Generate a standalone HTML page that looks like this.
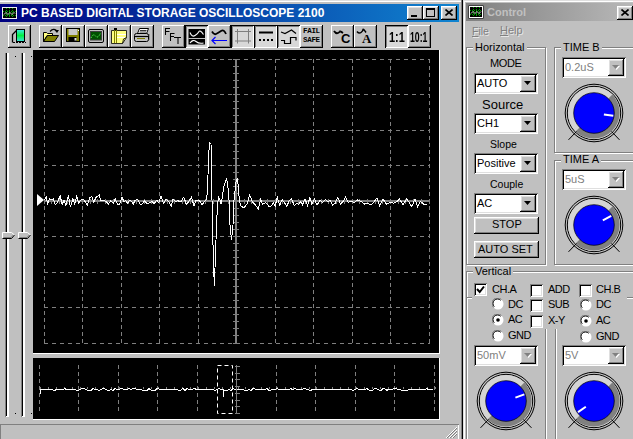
<!DOCTYPE html><html><head><meta charset="utf-8"><style>html,body{margin:0;padding:0;}body{width:633px;height:439px;overflow:hidden;position:relative;background:#c0c0c0;font-family:'Liberation Sans', sans-serif}</style></head><body>
<div style="position:absolute;left:0px;top:0px;width:462px;height:1px;background:#dfdfdf"></div>
<div style="position:absolute;left:0px;top:1px;width:462px;height:1px;background:#fff"></div>
<div style="position:absolute;left:0px;top:4px;width:459px;height:18px;background:linear-gradient(to right,#000080,#1084d0)"></div>
<svg style="position:absolute;left:2px;top:7px" width="15" height="12"><rect x="0.5" y="0.5" width="14" height="11" fill="#000" stroke="#f0f0f0"/><path d="M1 4.5H14M1 8.5H14M4.5 1V11M7.5 1V11M10.5 1V11" stroke="#00a000" stroke-width="1" stroke-dasharray="1 1"/><path d="M2 7.5L4 5.5L6 7.5L8 5.5L10 7.5L12 5.5L13 6.5" stroke="#e0ffe0" fill="none" stroke-width="0.9"/></svg>
<div style="position:absolute;left:21px;top:7px;font:bold 12px/12px 'Liberation Sans', sans-serif;color:#fff;white-space:nowrap;">PC BASED DIGITAL STORAGE OSCILLOSCOPE 2100</div>
<div style="position:absolute;left:407px;top:6px;width:16px;height:14px;background:#c0c0c0;box-shadow:inset -1px -1px #000,inset 1px 1px #fff,inset -2px -2px #808080,inset 2px 2px #dfdfdf"></div>
<div style="position:absolute;left:423px;top:6px;width:16px;height:14px;background:#c0c0c0;box-shadow:inset -1px -1px #000,inset 1px 1px #fff,inset -2px -2px #808080,inset 2px 2px #dfdfdf"></div>
<div style="position:absolute;left:441px;top:6px;width:16px;height:14px;background:#c0c0c0;box-shadow:inset -1px -1px #000,inset 1px 1px #fff,inset -2px -2px #808080,inset 2px 2px #dfdfdf"></div>
<div style="position:absolute;left:411px;top:15px;width:6px;height:2px;background:#000"></div>
<div style="position:absolute;left:426px;top:8px;width:9px;height:9px;border:1px solid #000;border-top-width:2px;box-sizing:border-box"></div>
<svg style="position:absolute;left:445px;top:9px" width="8" height="7"><path d="M0.5 0.5L7.5 6.5M7.5 0.5L0.5 6.5" stroke="#000" stroke-width="1.6"/></svg>
<div style="position:absolute;left:461px;top:0px;width:1px;height:439px;background:#808080"></div>
<div style="position:absolute;left:462px;top:0px;width:1px;height:439px;background:#000"></div>
<div style="position:absolute;left:8px;top:25px;width:23px;height:23px;background:#c0c0c0;box-shadow:inset -1px -1px #000,inset 1px 1px #fff,inset -2px -2px #808080"></div>
<div style="position:absolute;left:39px;top:25px;width:23px;height:23px;background:#c0c0c0;box-shadow:inset -1px -1px #000,inset 1px 1px #fff,inset -2px -2px #808080"></div>
<div style="position:absolute;left:62px;top:25px;width:23px;height:23px;background:#c0c0c0;box-shadow:inset -1px -1px #000,inset 1px 1px #fff,inset -2px -2px #808080"></div>
<div style="position:absolute;left:85px;top:25px;width:23px;height:23px;background:#c0c0c0;box-shadow:inset -1px -1px #000,inset 1px 1px #fff,inset -2px -2px #808080"></div>
<div style="position:absolute;left:108px;top:25px;width:23px;height:23px;background:#c0c0c0;box-shadow:inset -1px -1px #000,inset 1px 1px #fff,inset -2px -2px #808080"></div>
<div style="position:absolute;left:131px;top:25px;width:23px;height:23px;background:#c0c0c0;box-shadow:inset -1px -1px #000,inset 1px 1px #fff,inset -2px -2px #808080"></div>
<div style="position:absolute;left:162px;top:25px;width:23px;height:23px;background:#c0c0c0;box-shadow:inset -1px -1px #000,inset 1px 1px #fff,inset -2px -2px #808080"></div>
<div style="position:absolute;left:185px;top:25px;width:23px;height:23px;background:#d8d8d8;box-shadow:inset 1px 1px #000,inset -1px -1px #fff,inset 2px 2px #808080"></div>
<div style="position:absolute;left:208px;top:25px;width:23px;height:23px;background:#c0c0c0;box-shadow:inset -1px -1px #000,inset 1px 1px #fff,inset -2px -2px #808080"></div>
<div style="position:absolute;left:231px;top:25px;width:23px;height:23px;background:#d8d8d8;box-shadow:inset 1px 1px #000,inset -1px -1px #fff,inset 2px 2px #808080"></div>
<div style="position:absolute;left:254px;top:25px;width:23px;height:23px;background:#d8d8d8;box-shadow:inset 1px 1px #000,inset -1px -1px #fff,inset 2px 2px #808080"></div>
<div style="position:absolute;left:277px;top:25px;width:23px;height:23px;background:#d8d8d8;box-shadow:inset 1px 1px #000,inset -1px -1px #fff,inset 2px 2px #808080"></div>
<div style="position:absolute;left:300px;top:25px;width:23px;height:23px;background:#c0c0c0;box-shadow:inset -1px -1px #000,inset 1px 1px #fff,inset -2px -2px #808080"></div>
<div style="position:absolute;left:331px;top:25px;width:23px;height:23px;background:#c0c0c0;box-shadow:inset -1px -1px #000,inset 1px 1px #fff,inset -2px -2px #808080"></div>
<div style="position:absolute;left:354px;top:25px;width:23px;height:23px;background:#c0c0c0;box-shadow:inset -1px -1px #000,inset 1px 1px #fff,inset -2px -2px #808080"></div>
<div style="position:absolute;left:385px;top:25px;width:23px;height:23px;background:#d8d8d8;box-shadow:inset 1px 1px #000,inset -1px -1px #fff,inset 2px 2px #808080"></div>
<div style="position:absolute;left:408px;top:25px;width:23px;height:23px;background:#c0c0c0;box-shadow:inset -1px -1px #000,inset 1px 1px #fff,inset -2px -2px #808080"></div>
<svg style="position:absolute;left:8px;top:25px" width="23" height="23"><defs><linearGradient id="scr" x1="0" y1="0" x2="0" y2="1"><stop offset="0" stop-color="#40e8e8"/><stop offset="0.5" stop-color="#00f040"/><stop offset="1" stop-color="#40e0e0"/></linearGradient></defs><path d="M4.5 17.5V9.5L8.5 5.5" fill="none" stroke="#000" stroke-width="1.3"/><rect x="8.5" y="4.5" width="8" height="12" fill="url(#scr)" stroke="#000"/><path d="M5 17.5H18" stroke="#000" stroke-dasharray="2 1"/></svg><svg style="position:absolute;left:39px;top:25px" width="23" height="23"><path d="M4.5 7.5H7.5L8.5 8.5H13.5V10.5H8L4.5 16.5Z" fill="#ffff80" stroke="#000"/><path d="M4.5 16.5L8.5 10.5H19.5L15.5 16.5Z" fill="#808000" stroke="#000"/><path d="M11 6.5Q14 3 17.5 5.5" fill="none" stroke="#000" stroke-width="1.2"/><path d="M15.5 5H20L18 8Z" fill="#000"/></svg><svg style="position:absolute;left:62px;top:25px" width="23" height="23"><rect x="4.5" y="3.5" width="13" height="13" fill="#808000" stroke="#000"/><rect x="6.5" y="4" width="9" height="6" fill="#c8c8c8"/><rect x="6.5" y="12" width="8" height="4.5" fill="#000"/><rect x="12.5" y="13" width="2" height="2.5" fill="#e0e0e0"/><rect x="16" y="5" width="1" height="1" fill="#fff"/></svg><svg style="position:absolute;left:85px;top:25px" width="23" height="23"><rect x="3.5" y="4.5" width="15" height="13" rx="1.5" fill="#c0c0c0" stroke="#000"/><rect x="5.5" y="6.5" width="11" height="8.5" fill="#005000" stroke="#404040"/><path d="M6 13Q8 8 10.5 11T15.5 8" stroke="#60ff60" fill="none" stroke-dasharray="1 1"/></svg><svg style="position:absolute;left:108px;top:25px" width="23" height="23"><path d="M3.5 5.5H18.5V12.5L14.5 18.5H3.5Z" fill="#ffff80" stroke="#000" stroke-width="0.8"/><path d="M6.5 5V18M8.5 5V18" stroke="#808000"/><path d="M9 9.5H18M9 12.5H17" stroke="#fff"/><rect x="6" y="3" width="3" height="2" fill="#000"/><path d="M14.5 18.5L15.5 14L18.5 12.5" fill="none" stroke="#000" stroke-width="0.8"/></svg><svg style="position:absolute;left:131px;top:25px" width="23" height="23"><path d="M6.5 8.5L8.5 3.5H17.5L15.5 8.5Z" fill="#fff" stroke="#000"/><path d="M9 5.5H15.5M8.5 7H15" stroke="#000" stroke-width="0.8"/><rect x="3.5" y="8.5" width="14" height="8" rx="2" fill="#c0c0c0" stroke="#000"/><path d="M4 11.5H17" stroke="#000" stroke-width="1.2"/><path d="M6 13.5H14" stroke="#808000"/><path d="M18 9.5V15.5" stroke="#000" stroke-dasharray="1 1"/></svg><svg style="position:absolute;left:162px;top:25px" width="23" height="23"><path d="M3.5 10V3.5H8M3.5 6.5H7.5M8.5 16V8.5H12.5M8.5 11.5H12M12 12.5H19M16 12.5V19" stroke="#000" fill="none" stroke-width="1.05"/></svg><svg style="position:absolute;left:185px;top:25px" width="23" height="23"><rect x="3.5" y="4" width="16.5" height="15.5" fill="#000"/><path d="M3.5 13.5H20" stroke="#c0c0c0"/><path d="M5 7.5Q7 12.5 10 10.5T14 6.5T18.5 9.5" stroke="#fff" fill="none" stroke-width="1.1"/><path d="M5 18Q8 14 11 16.5T18.5 18" stroke="#fff" fill="none" stroke-width="1.1"/></svg><svg style="position:absolute;left:208px;top:25px" width="23" height="23"><path d="M4 6.5Q6 10 8 9T13 6T18 9" stroke="#000" fill="none" stroke-width="1.8"/><path d="M4 15.5H19M7.5 12L4 15.5L7.5 19" stroke="#0000ff" fill="none" stroke-width="1.2"/></svg><svg style="position:absolute;left:231px;top:25px" width="23" height="23"><path d="M6.5 4V18.5M17.5 4V18.5M4 6.5H20M4 16H20" stroke="#808080" fill="none"/></svg><svg style="position:absolute;left:254px;top:25px" width="23" height="23"><path d="M5 7.5H19" stroke="#000" stroke-width="2"/><rect x="5" y="14" width="2" height="2"/><rect x="9" y="14" width="2" height="2"/><rect x="13" y="14" width="2" height="2"/><rect x="17" y="14" width="2" height="2"/></svg><svg style="position:absolute;left:277px;top:25px" width="23" height="23"><path d="M4 7L8 8.5L14.5 5L19 8.5" stroke="#000" fill="none" stroke-width="1.2"/><path d="M4 15.5H7.5V18.5H13.5V12.5H19V15.5" stroke="#000" fill="none" stroke-width="1.2"/></svg>
<div style="position:absolute;left:303px;top:28px;font:bold 7.5px/7.5px 'Liberation Sans', sans-serif;color:#000;white-space:nowrap;font-family:Liberation Mono,monospace;letter-spacing:-0.3px">FAIL</div>
<div style="position:absolute;left:303px;top:37px;font:bold 7.5px/7.5px 'Liberation Sans', sans-serif;color:#000;white-space:nowrap;font-family:Liberation Mono,monospace;letter-spacing:-0.3px">SAFE</div>
<svg style="position:absolute;left:331px;top:25px" width="23" height="23"><path d="M3 6Q5 9 7 8T9 6.5T12 8" stroke="#000" fill="none" stroke-width="1.8"/></svg>
<div style="position:absolute;left:341px;top:32px;font:bold 13px/13px 'Liberation Sans', sans-serif;color:#000;white-space:nowrap;">C</div>
<svg style="position:absolute;left:354px;top:25px" width="23" height="23"><path d="M3 6.5Q5 9 7 7.5T9 4.5T12 7.5" stroke="#000" fill="none" stroke-width="1.5"/></svg>
<div style="position:absolute;left:362px;top:32px;font:bold 13px/13px 'Liberation Sans', sans-serif;color:#000;white-space:nowrap;font-family:Liberation Serif,serif">A</div>
<div style="position:absolute;left:389px;top:30px;font:bold 14px/14px 'Liberation Sans', sans-serif;color:#000;white-space:nowrap;transform:scaleX(0.78);transform-origin:0 0;letter-spacing:0px">1:1</div>
<div style="position:absolute;left:410px;top:30px;font:bold 14px/14px 'Liberation Sans', sans-serif;color:#000;white-space:nowrap;transform:scaleX(0.62);transform-origin:0 0">10:1</div>
<div style="position:absolute;left:5px;top:53px;width:1px;height:364px;background:#808080"></div>
<div style="position:absolute;left:6px;top:53px;width:1px;height:363px;background:#000"></div>
<div style="position:absolute;left:7px;top:53px;width:2px;height:364px;background:#fff"></div>
<div style="position:absolute;left:6px;top:416px;width:2px;height:1px;background:#fff"></div>
<div style="position:absolute;left:21px;top:53px;width:1px;height:364px;background:#808080"></div>
<div style="position:absolute;left:22px;top:53px;width:1px;height:363px;background:#000"></div>
<div style="position:absolute;left:23px;top:53px;width:2px;height:364px;background:#fff"></div>
<div style="position:absolute;left:22px;top:416px;width:2px;height:1px;background:#fff"></div>
<div style="position:absolute;left:15px;top:56px;width:1px;height:1px;background:#000"></div>
<div style="position:absolute;left:15px;top:413px;width:1px;height:1px;background:#000"></div>
<div style="position:absolute;left:31px;top:56px;width:1px;height:1px;background:#000"></div>
<div style="position:absolute;left:31px;top:413px;width:1px;height:1px;background:#000"></div>
<svg style="position:absolute;left:2px;top:232px" width="14" height="8"><path d="M0.5 0.5H9.5L12.5 3L9.5 6.5H0.5Z" fill="#c0c0c0"/><path d="M0.5 6.5V0.5H9.5L12.5 3" fill="none" stroke="#fff"/><path d="M0.5 6.5H9.5L12.5 3" fill="none" stroke="#000"/><path d="M1.5 5.5H9L11 3.2" fill="none" stroke="#808080"/></svg>
<svg style="position:absolute;left:18px;top:232px" width="14" height="8"><path d="M0.5 0.5H9.5L12.5 3L9.5 6.5H0.5Z" fill="#c0c0c0"/><path d="M0.5 6.5V0.5H9.5L12.5 3" fill="none" stroke="#fff"/><path d="M0.5 6.5H9.5L12.5 3" fill="none" stroke="#000"/><path d="M1.5 5.5H9L11 3.2" fill="none" stroke="#808080"/></svg>
<svg style="position:absolute;left:0;top:0" width="633" height="439"><rect x="33" y="50" width="406" height="303" fill="#000"/><path d="M439.5 50V354M33 353.5H440" stroke="#fff"/><path d="M44.5 59V344M82.5 59V344M121.5 59V344M159.5 59V344M198.5 59V344M275.5 59V344M313.5 59V344M352.5 59V344M390.5 59V344M429.5 59V344" stroke="#808080" stroke-dasharray="4 3" fill="none"/><path d="M44 59.5H430M44 94.5H430M44 130.5H430M44 165.5H430M44 236.5H430M44 272.5H430M44 307.5H430M44 343.5H430" stroke="#808080" stroke-dasharray="4 4" fill="none"/><path d="M236 59V344" stroke="#808080" stroke-width="2" fill="none"/><path d="M44 201H430" stroke="#808080" stroke-width="2" fill="none"/><path d="M233 59.5H239M233 66.5H239M233 73.5H239M233 80.5H239M233 87.5H239M233 94.5H239M233 101.5H239M233 108.5H239M233 115.5H239M233 122.5H239M233 130.5H239M233 137.5H239M233 144.5H239M233 151.5H239M233 158.5H239M233 165.5H239M233 172.5H239M233 179.5H239M233 186.5H239M233 193.5H239M233 201.5H239M233 208.5H239M233 215.5H239M233 222.5H239M233 229.5H239M233 236.5H239M233 243.5H239M233 250.5H239M233 257.5H239M233 264.5H239M233 272.5H239M233 279.5H239M233 286.5H239M233 293.5H239M233 300.5H239M233 307.5H239M233 314.5H239M233 321.5H239M233 328.5H239M233 335.5H239M233 343.5H239M44.5 199V204M51.5 199V204M59.5 199V204M67.5 199V204M74.5 199V204M82.5 199V204M90.5 199V204M97.5 199V204M105.5 199V204M113.5 199V204M121.5 199V204M128.5 199V204M136.5 199V204M144.5 199V204M151.5 199V204M159.5 199V204M167.5 199V204M174.5 199V204M182.5 199V204M190.5 199V204M198.5 199V204M205.5 199V204M213.5 199V204M221.5 199V204M228.5 199V204M236.5 199V204M244.5 199V204M251.5 199V204M259.5 199V204M267.5 199V204M275.5 199V204M282.5 199V204M290.5 199V204M298.5 199V204M305.5 199V204M313.5 199V204M321.5 199V204M328.5 199V204M336.5 199V204M344.5 199V204M352.5 199V204M359.5 199V204M367.5 199V204M375.5 199V204M382.5 199V204M390.5 199V204M398.5 199V204M405.5 199V204M413.5 199V204M421.5 199V204M429.5 199V204" stroke="#808080" fill="none"/><path d="M37 194V206L44 200Z" fill="#fff"/><polyline points="44.4,200.2 46.3,197.0 47.6,204.6 49.5,198.3 51.4,200.0 53.3,199.0 55.2,204.6 57.0,203.3 60.2,195.7 62.1,204.6 64.0,200.2 65.9,205.2 68.4,195.1 70.3,207.0 72.9,198.9 74.8,204.0 76.7,196.4 78.6,203.3 80.5,200.2 83.0,199.0 84.9,201.4 87.4,205.2 89.9,197.6 91.8,196.4 93.7,202.0 96.3,197.0 99.4,195.1 100.7,200.8 103.2,200.2 105.7,201.4 108.3,204.0 110.8,200.8 113.3,203.3 115.2,199.0 117.7,204.6 119.6,204.0 121.9,197.0 123.8,201.4 125.7,200.8 127.6,203.3 129.5,200.2 131.4,201.4 133.3,204.0 135.2,200.2 137.7,199.5 140.2,204.6 142.1,204.0 144.7,200.8 147.2,204.0 149.7,202.7 152.2,201.4 154.1,204.0 156.7,200.2 158.6,202.7 161.1,196.4 163.6,203.3 166.1,199.5 168.7,201.4 171.2,205.9 173.1,198.9 175.6,201.4 178.2,200.8 180.7,202.0 183.8,197.0 186.4,204.6 188.9,201.4 191.4,197.0 194.0,205.9 195.9,200.8 199.6,200.8 202.0,205.0 204.0,202.0 206.0,200.0 207.0,195.0 208.0,175.0 209.0,150.0 209.6,143.0 211.0,144.0 211.5,170.0 212.0,200.0 213.0,245.0 214.3,286.0 215.5,255.0 216.5,225.0 217.5,205.0 218.5,197.0 220.0,200.0 221.0,204.0 222.0,199.0 224.0,186.0 226.4,179.0 227.5,182.0 229.0,200.0 230.0,225.0 231.5,240.0 233.0,225.0 234.0,200.0 236.0,182.0 237.5,178.0 238.5,190.0 239.5,202.0 241.0,206.0 244.0,208.0 247.0,204.0 249.7,195.2 252.5,202.0 255.7,205.2 258.2,209.0 260.7,199.5 262.6,204.0 265.8,202.7 269.0,206.5 271.5,205.9 273.4,202.7 275.3,205.9 277.2,197.0 279.7,205.2 282.2,199.5 284.8,203.3 286.7,206.5 289.2,200.8 291.7,198.9 294.2,205.9 296.8,203.3 298.7,204.6 300.6,201.4 302.5,204.6 305.0,198.9 307.5,205.2 310.0,197.6 311.9,204.6 314.5,198.9 317.0,205.2 320.2,200.2 322.7,202.7 325.2,199.5 327.7,201.4 330.0,200.6 332.6,205.0 335.2,203.2 337.8,197.2 340.4,204.1 343.0,201.5 345.6,197.2 348.2,202.4 350.9,201.5 354.3,202.4 357.8,199.8 361.3,201.5 364.8,204.1 367.4,203.2 370.8,205.0 374.3,201.5 376.9,198.0 379.5,205.9 383.0,198.9 386.5,204.1 389.9,202.4 393.4,203.2 396.9,201.5 399.5,198.9 403.0,205.0 406.5,198.9 409.1,202.4 411.7,206.7 415.1,198.9 417.7,206.7 420.4,201.5 423.8,204.1 427.3,204.1" fill="none" stroke="#fff" stroke-width="1" stroke-linejoin="miter" shape-rendering="crispEdges"/><rect x="33" y="358" width="406" height="61" fill="#000"/><path d="M439.5 358V420M33 419.5H440" stroke="#fff"/><path d="M39.5 365V414M78.5 365V414M118.5 365V414M157.5 365V414M197.5 365V414M236.5 365V414M276.5 365V414M315.5 365V414M355.5 365V414M394.5 365V414M434.5 365V414" stroke="#808080" stroke-dasharray="4 3" fill="none"/><path d="M40.5 387V389M48.5 387V389M56.5 387V389M64.5 387V389M72.5 387V389M80.5 387V389M87.5 387V389M95.5 387V389M103.5 387V389M111.5 387V389M119.5 387V389M127.5 387V389M135.5 387V389M143.5 387V389M151.5 387V389M158.5 387V389M166.5 387V389M174.5 387V389M182.5 387V389M190.5 387V389M198.5 387V389M206.5 387V389M214.5 387V389M222.5 387V389M230.5 387V389M238.5 387V389M245.5 387V389M253.5 387V389M261.5 387V389M269.5 387V389M277.5 387V389M285.5 387V389M293.5 387V389M301.5 387V389M309.5 387V389M316.5 387V389M324.5 387V389M332.5 387V389M340.5 387V389M348.5 387V389M356.5 387V389M364.5 387V389M372.5 387V389M380.5 387V389M388.5 387V389M396.5 387V389M403.5 387V389M411.5 387V389M419.5 387V389M427.5 387V389M435.5 387V389" stroke="#808080" fill="none"/><polyline points="40.0,394.0 40.0,389.0 41.0,389.5 43.0,389.0 45.0,389.0 47.0,389.5 49.0,389.5 51.0,389.0 53.0,390.0 55.0,390.5 57.0,389.0 59.0,389.5 61.0,389.0 63.0,389.5 65.0,388.5 67.0,390.0 69.0,389.5 71.0,389.0 73.0,389.5 75.0,389.5 77.0,390.5 79.0,390.0 81.0,389.0 83.0,388.5 85.0,389.0 87.0,390.0 89.0,390.0 91.0,390.5 93.0,388.5 95.0,389.5 97.0,389.5 99.0,390.5 101.0,389.5 103.0,388.5 105.0,389.0 107.0,390.0 109.0,390.5 111.0,389.5 113.0,390.5 115.0,388.5 117.0,389.5 119.0,389.5 121.0,388.5 123.0,389.0 125.0,389.5 127.0,389.5 129.0,388.5 131.0,389.5 133.0,388.5 135.0,388.5 137.0,389.5 139.0,390.0 141.0,389.0 143.0,390.5 145.0,390.0 147.0,390.5 149.0,388.5 151.0,390.0 153.0,390.0 155.0,390.5 157.0,388.5 159.0,389.0 161.0,390.0 163.0,389.5 165.0,389.5 167.0,389.5 169.0,389.5 171.0,389.5 173.0,390.0 175.0,389.5 177.0,389.5 179.0,390.5 181.0,390.0 183.0,388.5 185.0,390.5 187.0,388.5 189.0,389.5 191.0,390.0 193.0,389.0 195.0,388.5 197.0,390.0 199.0,389.0 201.0,389.5 203.0,389.0 205.0,389.0 207.0,390.0 209.0,389.0 211.0,389.5 213.0,389.5 215.0,390.5 217.0,389.5 219.0,388.5 221.0,389.5 223.0,389.0 225.0,390.5 227.0,390.5 229.0,389.5 231.0,390.5 233.0,388.5 235.0,389.5 237.0,389.0 239.0,389.0 241.0,389.0 243.0,389.5 245.0,390.5 247.0,390.5 249.0,389.5 251.0,390.5 253.0,388.5 255.0,389.0 257.0,389.5 259.0,389.5 261.0,389.5 263.0,389.5 265.0,390.0 267.0,388.5 269.0,390.5 271.0,390.0 273.0,389.5 275.0,389.5 277.0,388.5 279.0,389.5 281.0,390.0 283.0,389.5 285.0,389.5 287.0,389.5 289.0,390.0 291.0,388.5 293.0,390.0 295.0,388.5 297.0,389.5 299.0,389.5 301.0,389.0 303.0,389.0 305.0,388.5 307.0,389.5 309.0,390.0 311.0,390.5 313.0,389.0 315.0,389.5 317.0,389.0 319.0,389.5 321.0,389.0 323.0,389.5 325.0,389.5 327.0,389.5 329.0,389.5 331.0,389.5 333.0,389.5 335.0,389.0 337.0,389.0 339.0,389.5 341.0,389.5 343.0,390.0 345.0,389.5 347.0,389.0 349.0,389.5 351.0,389.5 353.0,390.5 355.0,389.5 357.0,388.5 359.0,389.5 361.0,389.5 363.0,389.5 365.0,389.5 367.0,388.5 369.0,390.0 371.0,390.0 373.0,390.0 375.0,388.5 377.0,389.0 379.0,390.0 381.0,390.5 383.0,388.5 385.0,389.0 387.0,390.5 389.0,389.0 391.0,389.5 393.0,389.0 395.0,388.5 397.0,389.0 399.0,389.5 401.0,390.0 403.0,390.5 405.0,390.5 407.0,390.5 409.0,389.5 411.0,389.5 413.0,390.0 415.0,389.5 417.0,389.0 419.0,389.5 421.0,389.0 423.0,389.5 425.0,389.5 427.0,388.5 429.0,390.0 431.0,389.0 433.0,389.5" fill="none" stroke="#fff" stroke-width="1" shape-rendering="crispEdges"/><path d="M223.5 389V397" stroke="#fff"/><rect x="217.5" y="365.5" width="15" height="48" fill="none" stroke="#fff" stroke-dasharray="4 3"/><path d="M236.5 365V414M235 366.5H240M235 373.5H240M235 379.5H240M235 386.5H240M235 393.5H240M235 400.5H240M235 406.5H240M235 413.5H240" stroke="#808080" fill="none"/></svg>
<div style="position:absolute;left:0px;top:424px;width:459px;height:17px;box-shadow:inset 1px 1px #808080,inset -1px -1px #fff"></div>
<svg style="position:absolute;left:445px;top:426px" width="13" height="13"><path d="M12 1L1 12M12 4L4 12M12 7L7 12" stroke="#fff"/><path d="M12 2L2 12M12 5L5 12M12 8L8 12" stroke="#808080"/></svg>
<div style="position:absolute;left:463px;top:0px;width:1px;height:439px;background:#dfdfdf"></div>
<div style="position:absolute;left:464px;top:0px;width:1px;height:439px;background:#fff"></div>
<div style="position:absolute;left:463px;top:0px;width:170px;height:1px;background:#dfdfdf"></div>
<div style="position:absolute;left:464px;top:1px;width:169px;height:1px;background:#fff"></div>
<div style="position:absolute;left:466px;top:3px;width:167px;height:18px;background:linear-gradient(to right,#808080,#b8b8b8)"></div>
<svg style="position:absolute;left:468px;top:5px" width="16" height="14"><rect x="0.5" y="0.5" width="15" height="13" fill="#000"/><rect x="1.5" y="1.5" width="13" height="11" fill="none" stroke="#fff"/><path d="M2 5.5H14M2 9.5H14M5.5 2V12M8.5 2V12M11.5 2V12" stroke="#00a000" stroke-width="1" stroke-dasharray="1 1"/><path d="M3 8.5L5 6.5L7 8.5L9 6.5L11 8.5L13 6.5" stroke="#e0ffe0" fill="none" stroke-width="0.9"/></svg>
<div style="position:absolute;left:487px;top:7px;font:bold 11px/11px 'Liberation Sans', sans-serif;color:#c0c0c0;white-space:nowrap;">Control</div>
<div style="position:absolute;left:617px;top:6px;width:16px;height:14px;background:#c0c0c0;box-shadow:inset -1px -1px #000,inset 1px 1px #fff,inset -2px -2px #808080,inset 2px 2px #dfdfdf"></div>
<svg style="position:absolute;left:621px;top:9px" width="8" height="7"><path d="M0.5 0.5L7.5 6.5M7.5 0.5L0.5 6.5" stroke="#000" stroke-width="1.6"/></svg>
<div style="position:absolute;left:472px;top:25.71px;font:normal 10.5px/10.5px 'Liberation Sans', sans-serif;color:#808080;white-space:nowrap;text-shadow:1px 1px #e8e8e8"><u>F</u>ile</div>
<div style="position:absolute;left:500px;top:25.29px;font:normal 11px/11px 'Liberation Sans', sans-serif;color:#808080;white-space:nowrap;text-shadow:1px 1px #e8e8e8"><u>H</u>elp</div>
<div style="position:absolute;left:466px;top:47px;width:78px;height:216px;border:1px solid #808080;box-shadow:1px 1px #fff, inset 1px 1px #fff"></div>
<div style="position:absolute;left:554px;top:47px;width:88px;height:104px;border:1px solid #808080;box-shadow:1px 1px #fff, inset 1px 1px #fff"></div>
<div style="position:absolute;left:554px;top:160px;width:88px;height:103px;border:1px solid #808080;box-shadow:1px 1px #fff, inset 1px 1px #fff"></div>
<div style="position:absolute;left:466px;top:271px;width:178px;height:198px;border:1px solid #808080;box-shadow:1px 1px #fff, inset 1px 1px #fff"></div>
<div style="position:absolute;left:466px;top:297px;width:78px;height:158px;border:1px solid #808080;box-shadow:1px 1px #fff, inset 1px 1px #fff"></div>
<div style="position:absolute;left:555px;top:297px;width:88px;height:158px;border:1px solid #808080;box-shadow:1px 1px #fff, inset 1px 1px #fff"></div>
<div style="position:absolute;left:473px;top:42.49px;font:11px/11px 'Liberation Sans', sans-serif;color:#000;background:#c0c0c0;padding:0 2px;white-space:nowrap">Horizontal</div>
<div style="position:absolute;left:561px;top:42.49px;font:11px/11px 'Liberation Sans', sans-serif;color:#000;background:#c0c0c0;padding:0 2px;white-space:nowrap">TIME B</div>
<div style="position:absolute;left:561px;top:154.29px;font:11px/11px 'Liberation Sans', sans-serif;color:#000;background:#c0c0c0;padding:0 2px;white-space:nowrap">TIME A</div>
<div style="position:absolute;left:473px;top:266.19px;font:11px/11px 'Liberation Sans', sans-serif;color:#000;background:#c0c0c0;padding:0 2px;white-space:nowrap">Vertical</div>
<div style="position:absolute;left:490px;top:58.29px;font:normal 11px/11px 'Liberation Sans', sans-serif;color:#000;white-space:nowrap;letter-spacing:-0.4px">MODE</div>
<div style="position:absolute;left:482px;top:98.00px;font:normal 13px/13px 'Liberation Sans', sans-serif;color:#000;white-space:nowrap;">Source</div>
<div style="position:absolute;left:490px;top:139.11px;font:normal 10.5px/10.5px 'Liberation Sans', sans-serif;color:#000;white-space:nowrap;">Slope</div>
<div style="position:absolute;left:490px;top:178.71px;font:normal 10.5px/10.5px 'Liberation Sans', sans-serif;color:#000;white-space:nowrap;">Couple</div>
<div style="position:absolute;left:474px;top:73px;width:64px;height:21px;background:#fff;box-shadow:inset 1px 1px #808080,inset -1px -1px #fff,inset 2px 2px #000,inset -2px -2px #dfdfdf"></div><div style="position:absolute;left:520px;top:75px;width:16px;height:17px;background:#c0c0c0;box-shadow:inset -1px -1px #000,inset 1px 1px #fff,inset -2px -2px #808080,inset 2px 2px #dfdfdf"></div><svg style="position:absolute;left:524px;top:81px" width="8" height="5"><path d="M0 0H7L3.5 4Z" fill="#000"/></svg><div style="position:absolute;left:477px;top:78.49px;font:normal 11px/11px 'Liberation Sans', sans-serif;color:#000;white-space:nowrap;">AUTO</div>
<div style="position:absolute;left:474px;top:113px;width:64px;height:21px;background:#fff;box-shadow:inset 1px 1px #808080,inset -1px -1px #fff,inset 2px 2px #000,inset -2px -2px #dfdfdf"></div><div style="position:absolute;left:520px;top:115px;width:16px;height:17px;background:#c0c0c0;box-shadow:inset -1px -1px #000,inset 1px 1px #fff,inset -2px -2px #808080,inset 2px 2px #dfdfdf"></div><svg style="position:absolute;left:524px;top:121px" width="8" height="5"><path d="M0 0H7L3.5 4Z" fill="#000"/></svg><div style="position:absolute;left:477px;top:118.49px;font:normal 11px/11px 'Liberation Sans', sans-serif;color:#000;white-space:nowrap;">CH1</div>
<div style="position:absolute;left:474px;top:153px;width:64px;height:21px;background:#fff;box-shadow:inset 1px 1px #808080,inset -1px -1px #fff,inset 2px 2px #000,inset -2px -2px #dfdfdf"></div><div style="position:absolute;left:520px;top:155px;width:16px;height:17px;background:#c0c0c0;box-shadow:inset -1px -1px #000,inset 1px 1px #fff,inset -2px -2px #808080,inset 2px 2px #dfdfdf"></div><svg style="position:absolute;left:524px;top:161px" width="8" height="5"><path d="M0 0H7L3.5 4Z" fill="#000"/></svg><div style="position:absolute;left:477px;top:158.49px;font:normal 11px/11px 'Liberation Sans', sans-serif;color:#000;white-space:nowrap;">Positive</div>
<div style="position:absolute;left:474px;top:193px;width:64px;height:21px;background:#fff;box-shadow:inset 1px 1px #808080,inset -1px -1px #fff,inset 2px 2px #000,inset -2px -2px #dfdfdf"></div><div style="position:absolute;left:520px;top:195px;width:16px;height:17px;background:#c0c0c0;box-shadow:inset -1px -1px #000,inset 1px 1px #fff,inset -2px -2px #808080,inset 2px 2px #dfdfdf"></div><svg style="position:absolute;left:524px;top:201px" width="8" height="5"><path d="M0 0H7L3.5 4Z" fill="#000"/></svg><div style="position:absolute;left:477px;top:198.49px;font:normal 11px/11px 'Liberation Sans', sans-serif;color:#000;white-space:nowrap;">AC</div>
<div style="position:absolute;left:474px;top:217px;width:65px;height:17px;background:#c0c0c0;box-shadow:inset -1px -1px #000,inset 1px 1px #fff,inset -2px -2px #808080,inset 2px 2px #dfdfdf"></div>
<div style="position:absolute;left:492px;top:219.29px;font:normal 11px/11px 'Liberation Sans', sans-serif;color:#000;white-space:nowrap;">STOP</div>
<div style="position:absolute;left:474px;top:241px;width:65px;height:17px;background:#c0c0c0;box-shadow:inset -1px -1px #000,inset 1px 1px #fff,inset -2px -2px #808080,inset 2px 2px #dfdfdf"></div>
<div style="position:absolute;left:478px;top:243.59px;font:normal 11px/11px 'Liberation Sans', sans-serif;color:#000;white-space:nowrap;">AUTO SET</div>
<div style="position:absolute;left:562px;top:57px;width:64px;height:21px;background:#fff;box-shadow:inset 1px 1px #808080,inset -1px -1px #fff,inset 2px 2px #000,inset -2px -2px #dfdfdf"></div><div style="position:absolute;left:608px;top:59px;width:16px;height:17px;background:#c0c0c0;box-shadow:inset -1px -1px #000,inset 1px 1px #fff,inset -2px -2px #808080,inset 2px 2px #dfdfdf"></div><svg style="position:absolute;left:612px;top:65px" width="9" height="6"><path d="M1 1H8L4.5 5Z" fill="#fff"/><path d="M0 0H7L3.5 4Z" fill="#808080"/></svg><div style="position:absolute;left:565px;top:62.49px;font:normal 11px/11px 'Liberation Sans', sans-serif;color:#808080;white-space:nowrap;text-shadow:1px 1px #fff">0.2uS</div>
<svg style="position:absolute;left:554px;top:73px" width="80" height="80" viewBox="554 73 80 80"><circle cx="594" cy="113" r="28.8" fill="none" stroke="#000" stroke-width="1"/><circle cx="594" cy="113" r="26.7" fill="none" stroke="#000" stroke-width="1"/><circle cx="594" cy="113" r="26" fill="#d4d4d4"/><path d="M612.38 94.62A26 26 0 0 1 575.62 131.38Z" fill="#808080"/><circle cx="594" cy="113" r="20.3" fill="#0000ff" stroke="#000" stroke-width="0.7"/><line x1="576.45" y1="131.50" x2="568.53" y2="139.84" stroke="#000" stroke-width="1"/><line x1="611.55" y1="131.50" x2="619.47" y2="139.84" stroke="#000" stroke-width="1"/><line x1="603.90" y1="114.39" x2="613.31" y2="115.71" stroke="#fff" stroke-width="2"/></svg>
<div style="position:absolute;left:562px;top:169px;width:64px;height:21px;background:#fff;box-shadow:inset 1px 1px #808080,inset -1px -1px #fff,inset 2px 2px #000,inset -2px -2px #dfdfdf"></div><div style="position:absolute;left:608px;top:171px;width:16px;height:17px;background:#c0c0c0;box-shadow:inset -1px -1px #000,inset 1px 1px #fff,inset -2px -2px #808080,inset 2px 2px #dfdfdf"></div><svg style="position:absolute;left:612px;top:177px" width="9" height="6"><path d="M1 1H8L4.5 5Z" fill="#fff"/><path d="M0 0H7L3.5 4Z" fill="#808080"/></svg><div style="position:absolute;left:565px;top:174.49px;font:normal 11px/11px 'Liberation Sans', sans-serif;color:#808080;white-space:nowrap;text-shadow:1px 1px #fff">5uS</div>
<svg style="position:absolute;left:554px;top:185px" width="80" height="80" viewBox="554 185 80 80"><circle cx="594" cy="225" r="28.8" fill="none" stroke="#000" stroke-width="1"/><circle cx="594" cy="225" r="26.7" fill="none" stroke="#000" stroke-width="1"/><circle cx="594" cy="225" r="26" fill="#d4d4d4"/><path d="M612.38 206.62A26 26 0 0 1 575.62 243.38Z" fill="#808080"/><circle cx="594" cy="225" r="20.3" fill="#0000ff" stroke="#000" stroke-width="0.7"/><line x1="576.45" y1="243.50" x2="568.53" y2="251.84" stroke="#000" stroke-width="1"/><line x1="611.55" y1="243.50" x2="619.47" y2="251.84" stroke="#000" stroke-width="1"/><line x1="602.83" y1="220.31" x2="611.22" y2="215.85" stroke="#fff" stroke-width="2"/></svg>
<div style="position:absolute;left:472px;top:283px;width:56px;height:16px;background:#c0c0c0"></div>
<div style="position:absolute;left:528px;top:283px;width:34px;height:46px;background:#c0c0c0"></div>
<div style="position:absolute;left:562px;top:283px;width:65px;height:16px;background:#c0c0c0"></div>
<div style="position:absolute;left:474px;top:283px;width:13px;height:13px;background:#fff;box-shadow:inset 1px 1px #808080,inset -1px -1px #fff,inset 2px 2px #000,inset -2px -2px #dfdfdf"></div><svg style="position:absolute;left:474px;top:283px" width="13" height="13"><path d="M3 6l2.7 3l4.3-5.5" fill="none" stroke="#000" stroke-width="2"/></svg>
<div style="position:absolute;left:492px;top:283.69px;font:normal 11px/11px 'Liberation Sans', sans-serif;color:#000;white-space:nowrap;letter-spacing:-0.5px">CH.A</div>
<div style="position:absolute;left:530px;top:284px;width:13px;height:13px;background:#fff;box-shadow:inset 1px 1px #808080,inset -1px -1px #fff,inset 2px 2px #000,inset -2px -2px #dfdfdf"></div>
<div style="position:absolute;left:530px;top:299px;width:13px;height:13px;background:#fff;box-shadow:inset 1px 1px #808080,inset -1px -1px #fff,inset 2px 2px #000,inset -2px -2px #dfdfdf"></div>
<div style="position:absolute;left:530px;top:315px;width:13px;height:13px;background:#fff;box-shadow:inset 1px 1px #808080,inset -1px -1px #fff,inset 2px 2px #000,inset -2px -2px #dfdfdf"></div>
<div style="position:absolute;left:548px;top:283.59px;font:normal 11px/11px 'Liberation Sans', sans-serif;color:#000;white-space:nowrap;letter-spacing:-0.5px">ADD</div>
<div style="position:absolute;left:548px;top:298.99px;font:normal 11px/11px 'Liberation Sans', sans-serif;color:#000;white-space:nowrap;letter-spacing:-0.5px">SUB</div>
<div style="position:absolute;left:548px;top:315.39px;font:normal 11px/11px 'Liberation Sans', sans-serif;color:#000;white-space:nowrap;letter-spacing:-0.5px">X-Y</div>
<div style="position:absolute;left:579px;top:284px;width:13px;height:13px;background:#fff;box-shadow:inset 1px 1px #808080,inset -1px -1px #fff,inset 2px 2px #000,inset -2px -2px #dfdfdf"></div>
<div style="position:absolute;left:596px;top:283.69px;font:normal 11px/11px 'Liberation Sans', sans-serif;color:#000;white-space:nowrap;letter-spacing:-0.5px">CH.B</div>
<svg style="position:absolute;left:492px;top:298px" width="12" height="12" viewBox="0 0 12 12"><circle cx="6" cy="6" r="5.5" fill="#fff"/><path d="M1.5 9.5A5.5 5.5 0 0 1 9.5 1.5" fill="none" stroke="#808080" stroke-width="1"/><path d="M2.3 8.7A4.5 4.5 0 0 1 8.7 2.3" fill="none" stroke="#000" stroke-width="1"/></svg>
<div style="position:absolute;left:508px;top:298.69px;font:normal 11px/11px 'Liberation Sans', sans-serif;color:#000;white-space:nowrap;letter-spacing:-0.5px">DC</div>
<svg style="position:absolute;left:492px;top:314px" width="12" height="12" viewBox="0 0 12 12"><circle cx="6" cy="6" r="5.5" fill="#fff"/><path d="M1.5 9.5A5.5 5.5 0 0 1 9.5 1.5" fill="none" stroke="#808080" stroke-width="1"/><path d="M2.3 8.7A4.5 4.5 0 0 1 8.7 2.3" fill="none" stroke="#000" stroke-width="1"/><circle cx="6" cy="6" r="1.8" fill="#000"/></svg>
<div style="position:absolute;left:508px;top:313.79px;font:normal 11px/11px 'Liberation Sans', sans-serif;color:#000;white-space:nowrap;letter-spacing:-0.5px">AC</div>
<svg style="position:absolute;left:492px;top:330px" width="12" height="12" viewBox="0 0 12 12"><circle cx="6" cy="6" r="5.5" fill="#fff"/><path d="M1.5 9.5A5.5 5.5 0 0 1 9.5 1.5" fill="none" stroke="#808080" stroke-width="1"/><path d="M2.3 8.7A4.5 4.5 0 0 1 8.7 2.3" fill="none" stroke="#000" stroke-width="1"/></svg>
<div style="position:absolute;left:508px;top:330.29px;font:normal 11px/11px 'Liberation Sans', sans-serif;color:#000;white-space:nowrap;letter-spacing:-0.5px">GND</div>
<svg style="position:absolute;left:580px;top:299px" width="12" height="12" viewBox="0 0 12 12"><circle cx="6" cy="6" r="5.5" fill="#fff"/><path d="M1.5 9.5A5.5 5.5 0 0 1 9.5 1.5" fill="none" stroke="#808080" stroke-width="1"/><path d="M2.3 8.7A4.5 4.5 0 0 1 8.7 2.3" fill="none" stroke="#000" stroke-width="1"/></svg>
<div style="position:absolute;left:596px;top:298.99px;font:normal 11px/11px 'Liberation Sans', sans-serif;color:#000;white-space:nowrap;letter-spacing:-0.5px">DC</div>
<svg style="position:absolute;left:580px;top:315px" width="12" height="12" viewBox="0 0 12 12"><circle cx="6" cy="6" r="5.5" fill="#fff"/><path d="M1.5 9.5A5.5 5.5 0 0 1 9.5 1.5" fill="none" stroke="#808080" stroke-width="1"/><path d="M2.3 8.7A4.5 4.5 0 0 1 8.7 2.3" fill="none" stroke="#000" stroke-width="1"/><circle cx="6" cy="6" r="1.8" fill="#000"/></svg>
<div style="position:absolute;left:596px;top:314.69px;font:normal 11px/11px 'Liberation Sans', sans-serif;color:#000;white-space:nowrap;letter-spacing:-0.5px">AC</div>
<svg style="position:absolute;left:580px;top:331px" width="12" height="12" viewBox="0 0 12 12"><circle cx="6" cy="6" r="5.5" fill="#fff"/><path d="M1.5 9.5A5.5 5.5 0 0 1 9.5 1.5" fill="none" stroke="#808080" stroke-width="1"/><path d="M2.3 8.7A4.5 4.5 0 0 1 8.7 2.3" fill="none" stroke="#000" stroke-width="1"/></svg>
<div style="position:absolute;left:596px;top:330.69px;font:normal 11px/11px 'Liberation Sans', sans-serif;color:#000;white-space:nowrap;letter-spacing:-0.5px">GND</div>
<div style="position:absolute;left:474px;top:345px;width:64px;height:21px;background:#fff;box-shadow:inset 1px 1px #808080,inset -1px -1px #fff,inset 2px 2px #000,inset -2px -2px #dfdfdf"></div><div style="position:absolute;left:520px;top:347px;width:16px;height:17px;background:#c0c0c0;box-shadow:inset -1px -1px #000,inset 1px 1px #fff,inset -2px -2px #808080,inset 2px 2px #dfdfdf"></div><svg style="position:absolute;left:524px;top:353px" width="9" height="6"><path d="M1 1H8L4.5 5Z" fill="#fff"/><path d="M0 0H7L3.5 4Z" fill="#808080"/></svg><div style="position:absolute;left:477px;top:350.49px;font:normal 11px/11px 'Liberation Sans', sans-serif;color:#808080;white-space:nowrap;text-shadow:1px 1px #fff">50mV</div>
<svg style="position:absolute;left:466px;top:361px" width="80" height="80" viewBox="466 361 80 80"><circle cx="506" cy="401" r="28.8" fill="none" stroke="#000" stroke-width="1"/><circle cx="506" cy="401" r="26.7" fill="none" stroke="#000" stroke-width="1"/><circle cx="506" cy="401" r="26" fill="#d4d4d4"/><path d="M524.38 382.62A26 26 0 0 1 487.62 419.38Z" fill="#808080"/><circle cx="506" cy="401" r="20.3" fill="#0000ff" stroke="#000" stroke-width="0.7"/><line x1="488.45" y1="419.50" x2="480.53" y2="427.84" stroke="#000" stroke-width="1"/><line x1="523.55" y1="419.50" x2="531.47" y2="427.84" stroke="#000" stroke-width="1"/><line x1="515.40" y1="397.58" x2="524.32" y2="394.33" stroke="#fff" stroke-width="2"/></svg>
<div style="position:absolute;left:562px;top:345px;width:64px;height:21px;background:#fff;box-shadow:inset 1px 1px #808080,inset -1px -1px #fff,inset 2px 2px #000,inset -2px -2px #dfdfdf"></div><div style="position:absolute;left:608px;top:347px;width:16px;height:17px;background:#c0c0c0;box-shadow:inset -1px -1px #000,inset 1px 1px #fff,inset -2px -2px #808080,inset 2px 2px #dfdfdf"></div><svg style="position:absolute;left:612px;top:353px" width="9" height="6"><path d="M1 1H8L4.5 5Z" fill="#fff"/><path d="M0 0H7L3.5 4Z" fill="#808080"/></svg><div style="position:absolute;left:565px;top:350.49px;font:normal 11px/11px 'Liberation Sans', sans-serif;color:#808080;white-space:nowrap;text-shadow:1px 1px #fff">5V</div>
<svg style="position:absolute;left:554px;top:361px" width="80" height="80" viewBox="554 361 80 80"><circle cx="594" cy="401" r="28.8" fill="none" stroke="#000" stroke-width="1"/><circle cx="594" cy="401" r="26.7" fill="none" stroke="#000" stroke-width="1"/><circle cx="594" cy="401" r="26" fill="#d4d4d4"/><path d="M612.38 382.62A26 26 0 0 1 575.62 419.38Z" fill="#808080"/><circle cx="594" cy="401" r="20.3" fill="#0000ff" stroke="#000" stroke-width="0.7"/><line x1="576.45" y1="419.50" x2="568.53" y2="427.84" stroke="#000" stroke-width="1"/><line x1="611.55" y1="419.50" x2="619.47" y2="427.84" stroke="#000" stroke-width="1"/><line x1="585.81" y1="406.74" x2="578.03" y2="412.18" stroke="#fff" stroke-width="2"/></svg>
</body></html>
